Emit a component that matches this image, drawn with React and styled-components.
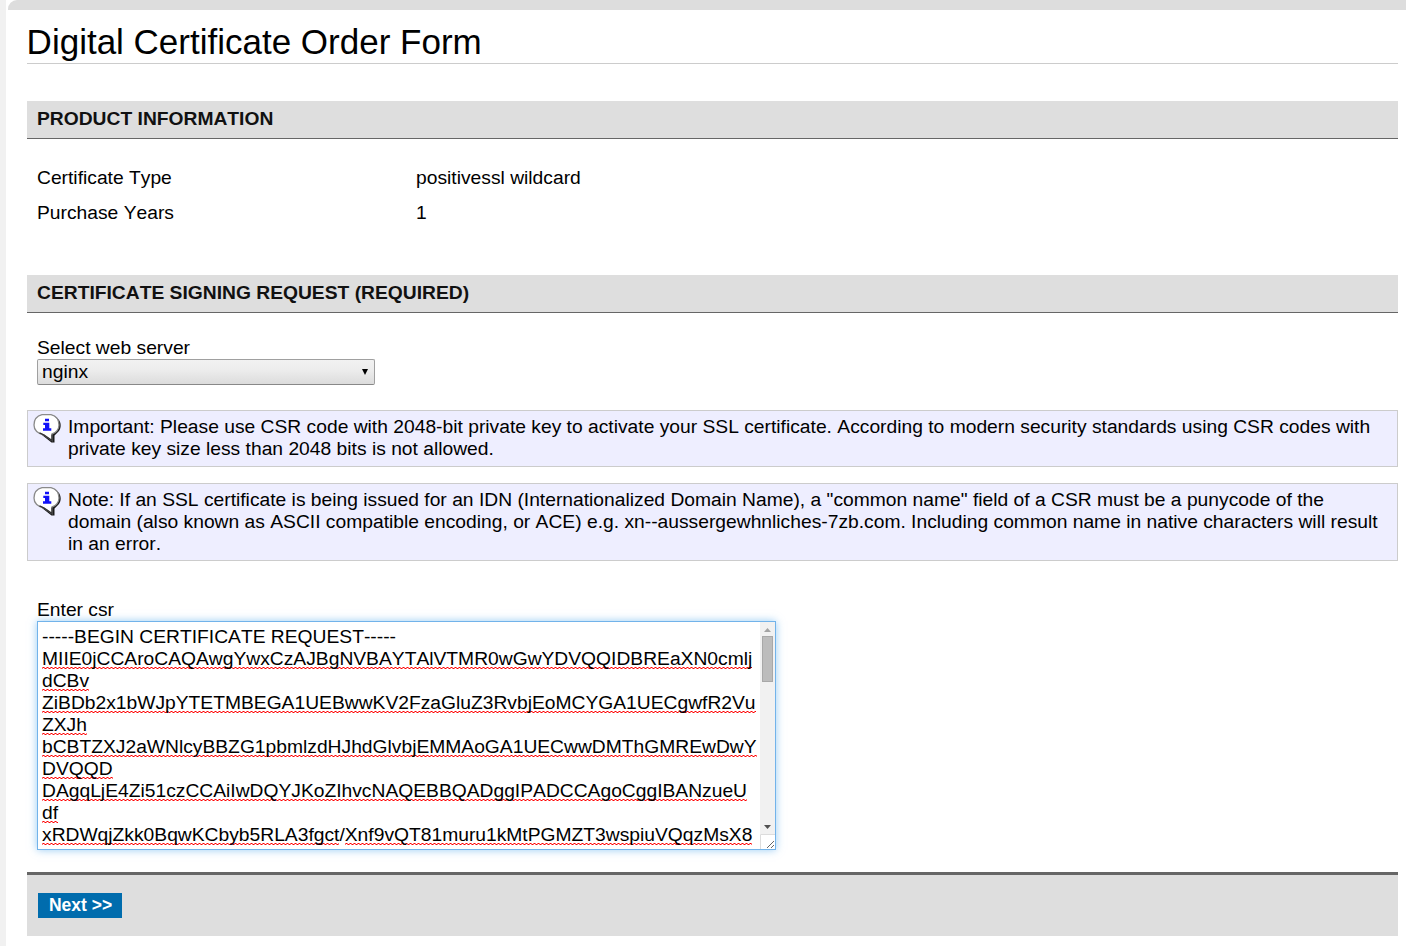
import React from "react";
import styled, { createGlobalStyle } from "styled-components";

const GlobalStyle = createGlobalStyle`
  * { box-sizing: border-box; }
  body {
    margin: 0;
    background: #f1f1f1;
    color: #000;
    font: 19.25px/22px "Liberation Sans", Arial, sans-serif;
    font-kerning: none;
    overflow: hidden;
  }
`;

const Page = styled.div`
  height: 946px;
  margin-left: 6px;
  background: #fff;
`;
const TopBand = styled.div`
  height: 10px;
  margin-left: 2px;
  background: #ddd;
  border-top-left-radius: 9px;
`;
const Content = styled.main`
  padding: 11px 8px 0 21px;
`;
const Title = styled.h1`
  height: 43px;
  margin: 0 0 37px;
  border-bottom: 1px solid #ccc;
  font-size: 35px;
  font-weight: 400;
  line-height: 42px;
  text-indent: -0.4px;
`;
const SectionTitle = styled.h2`
  height: 38px;
  margin: 0;
  padding: 7px 10px 0;
  border-bottom: 1px solid #666;
  background: #dedede;
  color: #111;
  font-size: 19.25px;
  line-height: 22px;
`;
const Details = styled.dl`
  display: grid;
  grid-template-columns: 379px 1fr;
  row-gap: 13px;
  height: 136px;
  margin: 0;
  padding: 28px 10px 0;
  align-content: start;
`;
const Detail = styled.dt``;
const DetailValue = styled.dd`
  margin: 0;
`;
const Field = styled.div`
  display: flex;
  flex-direction: column;
  align-items: flex-start;
  padding: ${(p) => p.$top}px 10px 0;
`;
const FieldLabel = styled.label`
  height: 22px;
`;
const SelectBox = styled.div`
  display: flex;
  align-items: center;
  justify-content: space-between;
  width: 338px;
  height: 26px;
  padding: 0 6px 1px 4px;
  border: 1px solid #a0a0a0;
  border-bottom-color: #888;
  border-radius: 2px;
  background: linear-gradient(#f2f2f2, #ededed 40%, #dcdcdc);
`;
const Notice = styled.div`
  display: flex;
  gap: 6px;
  height: ${(p) => p.$height}px;
  margin-top: ${(p) => p.$top}px;
  padding: 2px 16px 0 5px;
  border: 1px solid #ccc;
  background: #eef;
`;
const NoticeText = styled.div`
  flex: 1;
  padding-top: 3px;
`;
const TextArea = styled.div`
  display: flex;
  width: 739px;
  height: 229px;
  border: 1px solid #72b3ea;
  background: #fff;
  box-shadow: 0 0 8px rgba(82, 168, 236, 0.6);
`;
const Lines = styled.div`
  flex: 1;
  min-width: 0;
  padding: 4px 0 0 4px;
  overflow: hidden;
`;
const Line = styled.div`
  height: 22px;
  white-space: nowrap;
`;
const Misspelt = styled.span`
  display: inline-block;
  height: 22px;
  background-image: linear-gradient(90deg, #ff7070 1px, #f00 1px 2px, #ff7070 2px 3px, transparent 3px),
    linear-gradient(90deg, #ff7070 1px, transparent 1px 2px, #ff7070 2px 3px, #f00 3px);
  background-size: 4px 1px;
  background-repeat: repeat-x;
  background-position: 0 19px, 0 20px;
`;
const Scrollbar = styled.div`
  display: flex;
  flex: none;
  flex-direction: column;
  width: 15px;
  background: #f1f1f1;
`;
const ScrollArrow = styled.svg`
  display: block;
  width: 15px;
  height: 14px;
`;
const ScrollTrack = styled.div`
  flex: 1;
  padding: 0 2px;
`;
const ScrollThumb = styled.div`
  height: 46px;
  border: 1px solid #a8a8a8;
  background: #bcbcbc;
`;
const ResizeCorner = styled.svg`
  display: block;
  width: 15px;
  height: 15px;
  background: #fff;
`;
const ActionBar = styled.div`
  height: 64px;
  margin-top: 22px;
  padding: 18px 11px;
  border-top: 3px solid #666;
  background: #dedede;
`;
const NextButton = styled.button`
  display: block;
  width: 84px;
  height: 25px;
  padding: 0 0 1px 1px;
  border: 0;
  background: #006cad;
  color: #fff;
  font: bold 17.5px/23px "Liberation Sans", Arial, sans-serif;
`;

const csr = [
  ["", "-----BEGIN CERTIFICATE REQUEST-----"],
  ["MIIE0jCCAroCAQAwgYwxCzAJBgNVBAYTAlVTMR0wGwYDVQQIDBREaXN0cmlj"],
  ["dCBv"],
  ["ZiBDb2x1bWJpYTETMBEGA1UEBwwKV2FzaGluZ3RvbjEoMCYGA1UECgwfR2Vu"],
  ["ZXJh"],
  ["bCBTZXJ2aWNlcyBBZG1pbmlzdHJhdGlvbjEMMAoGA1UECwwDMThGMREwDwY"],
  ["DVQQD"],
  ["DAgqLjE4Zi51czCCAiIwDQYJKoZIhvcNAQEBBQADggIPADCCAgoCggIBANzueU"],
  ["df"],
  ["xRDWqjZkk0BqwKCbyb5RLA3fgct", "/", "Xnf9vQT81muru1kMtPGMZT3wspiuVQqzMsX8"],
];

function InfoIcon() {
  return (
    <svg width="29" height="31" viewBox="0 0 29 31" fill="none">
      <path d="M10 3C16 1 22 2 25 6C28.5 9 28.3 15 26 18L21.5 22.5V29.5H18.5L9 22Z" fill="#1a1a1a" />
      <path d="M9 1.7H18C23 3 26 7 26 12C26 16 23 20 19 21V27.5L11 22C5 20.5 1 17 1 12C1 7 4 3 9 1.7Z" fill="#fff" stroke="#8a8a8a" strokeWidth="1.3" />
      <path d="M19 21.5V27.5L11 22L6.5 19.8" stroke="#333" strokeWidth="1.3" />
      <path d="M12 5.7H16V8.2H12ZM10.3 9.8H16.3V15.3H18.3V17.8H10V15.3H12V12H10.3Z" fill="#1010f8" />
    </svg>
  );
}

export default function App() {
  return (
    <Page>
      <GlobalStyle />
      <TopBand />
      <Content>
        <Title>Digital Certificate Order Form</Title>
        <SectionTitle>PRODUCT INFORMATION</SectionTitle>
        <Details>
          <Detail>Certificate Type</Detail>
          <DetailValue>positivessl wildcard</DetailValue>
          <Detail>Purchase Years</Detail>
          <DetailValue>1</DetailValue>
        </Details>
        <SectionTitle>CERTIFICATE SIGNING REQUEST (REQUIRED)</SectionTitle>
        <Field $top={24}>
          <FieldLabel>Select web server</FieldLabel>
          <SelectBox>
            nginx
            <svg width="6" height="7" viewBox="0 0 6 7"><path d="M0 1H6L3 7Z" /></svg>
          </SelectBox>
        </Field>
        <Notice $top={25} $height={57}>
          <InfoIcon />
          <NoticeText>
            Important: Please use CSR code with 2048-bit private key to activate your SSL certificate. According to modern security standards using CSR codes with private key size less than 2048 bits is not allowed.
          </NoticeText>
        </Notice>
        <Notice $top={16} $height={78}>
          <InfoIcon />
          <NoticeText>
            Note: If an SSL certificate is being issued for an IDN (Internationalized Domain Name), a "common name" field of a CSR must be a punycode of the domain (also known as ASCII compatible encoding, or ACE) e.g. xn--aussergewhnliches-7zb.com. Including common name in native characters will result in an error.
          </NoticeText>
        </Notice>
        <Field $top={38}>
          <FieldLabel>Enter csr</FieldLabel>
          <TextArea>
            <Lines>
              {csr.map((parts, i) => (
                <Line key={i}>
                  {parts.map((part, j) => (j % 2 ? part : part && <Misspelt key={j}>{part}</Misspelt>))}
                </Line>
              ))}
            </Lines>
            <Scrollbar>
              <ScrollArrow viewBox="0 0 15 14"><path d="M4 10L7.5 6L11 10Z" fill="#a3a3a3" /></ScrollArrow>
              <ScrollTrack><ScrollThumb /></ScrollTrack>
              <ScrollArrow viewBox="0 0 15 14"><path d="M4 5L7.5 9L11 5Z" fill="#505050" /></ScrollArrow>
              <ResizeCorner viewBox="0 0 15 15" fill="none">
                <path d="M.5 15V.5H15" stroke="#dcdcdc" />
                <path d="M7 14L14 7M11 14L14 11" stroke="#666" />
              </ResizeCorner>
            </Scrollbar>
          </TextArea>
        </Field>
        <ActionBar>
          <NextButton>Next &gt;&gt;</NextButton>
        </ActionBar>
      </Content>
    </Page>
  );
}
